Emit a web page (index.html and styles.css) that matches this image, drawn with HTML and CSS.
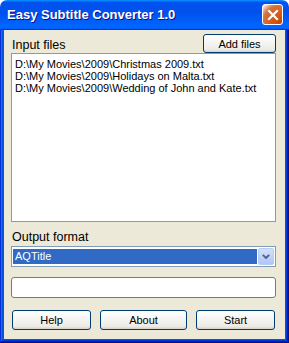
FILE: index.html
```html
<!doctype html>
<html>
<head>
  <meta charset="utf-8">
  <title>Easy Subtitle Converter 1.0</title>
  <link rel="stylesheet" href="styles.css">
</head>
<body>
<div class="window">
  <div class="title-bar">
    <span class="title-text">Easy Subtitle Converter 1.0</span>
    <span class="close-btn">
      <svg width="12" height="12" viewBox="0 0 12 12"><path d="M2 2 L10 10 M10 2 L2 10" stroke="#fff" stroke-width="2.2" stroke-linecap="square"/></svg>
    </span>
  </div>
  <div class="frame">
    <div class="client">
      <div class="files-head">
        <span class="field-label">Input files</span>
        <button class="xp-button add-btn">Add files</button>
      </div>
      <div class="file-list">
        <div class="file-item">D:\My Movies\2009\Christmas 2009.txt</div>
        <div class="file-item">D:\My Movies\2009\Holidays on Malta.txt</div>
        <div class="file-item">D:\My Movies\2009\Wedding of John and Kate.txt</div>
      </div>
      <div class="field-label format-label">Output format</div>
      <div class="combo">
        <span class="combo-value">AQTitle</span>
        <span class="combo-drop">
          <svg width="8" height="5" viewBox="0 0 8 5"><path d="M0.8 0.8 L4 4 L7.2 0.8" fill="none" stroke="#4d6185" stroke-width="1.8"/></svg>
        </span>
      </div>
      <div class="progress"></div>
      <div class="button-row">
        <button class="xp-button small-btn">Help</button>
        <button class="xp-button wide-btn">About</button>
        <button class="xp-button small-btn">Start</button>
      </div>
    </div>
  </div>
</div>
</body>
</html>
```

FILE: styles.css
```css
/* plain white page behind the dialog */
html,
body {
  margin: 0;
  background: #fff;
}
/* the whole dialog, frame included */
.window {
  width: 289px;
  height: 343px;
  display: flex;
  flex-direction: column;
  font-family: "Liberation Sans", Arial, sans-serif;
  font-size: 11px;
  color: #000;
}
.title-bar {
  height: 30px;
  flex-shrink: 0;
  display: flex;
  align-items: center;
  padding: 0 6px 0 7px;
  border-radius: 7px 7px 0 0;
  background: linear-gradient(180deg, #0997ff, #0053ee 8%, #0050ee 40%, #0066ff 88%, #0066ff 93%, #005bff 95%, #003dd7 96%, #003dd7);
  box-sizing: border-box;
}
.title-text {
  color: #fff;
  font-weight: bold;
  font-size: 13px;
  text-shadow: 1px 1px #0f1089;
  padding-bottom: 1px;
}
.close-btn {
  margin-left: auto;
  width: 19px;
  height: 19px;
  display: flex;
  align-items: center;
  justify-content: center;
  border: 1px solid #fff;
  border-radius: 3px;
  background: radial-gradient(circle at 90% 90%, #cc4600 0, #dc6527 55%, #cd7546 70%, #ffccb2 90%, #fff 100%);
  margin-top: -1px;
}
/* blue borders down the sides and along the bottom */
.frame {
  flex-grow: 1;
  display: flex;
  padding: 0 4px 4px;
  background: #0855dd;
  box-shadow: inset -1px -1px #00138c, inset 1px 0 #0831d9, inset -2px -2px #001ea0, inset 2px 0 #166aee, inset -3px -3px #003bda, inset 3px 0 #0855dd;
}
.client {
  flex-grow: 1;
  background: #ece9d8;
  padding: 0 9px 0 7px;
  display: flex;
  flex-direction: column;
}
.files-head {
  height: 23px;
  display: flex;
  align-items: flex-end;
  justify-content: space-between;
}
/* group labels are a size up from the list text */
.field-label {
  font-size: 12.5px;
  line-height: 14px;
  padding-left: 1px;
}
.files-head .field-label {
  margin-bottom: 1px;
}
.xp-button {
  font-family: inherit;
  font-size: 11px;
  color: #000;
  height: 20px;
  padding: 0;
  border: 1px solid #003c74;
  border-radius: 3px;
  background: linear-gradient(180deg, #fff, #ecebe6 86%, #d6d0c5);
  box-sizing: border-box;
}
.add-btn {
  width: 73px;
  height: 19px;
}
.file-list {
  height: 169px;
  box-sizing: border-box;
  border: 1px solid #7f9db9;
  background: #fff;
  padding: 4px 3px 0;
  flex-shrink: 0;
}
.file-item {
  line-height: 12px;
  white-space: nowrap;
}
.format-label {
  margin-top: 8px;
}
.combo {
  margin-top: 2px;
  height: 21px;
  box-sizing: border-box;
  border: 1px solid #7f9db9;
  background: #fff;
  padding: 1px;
  display: flex;
}
.combo-value {
  flex-grow: 1;
  margin: 1px 1px 1px 0;
  background: #316ac5;
  color: #fff;
  line-height: 15px;
  padding-left: 2px;
}
.combo-drop {
  width: 16px;
  box-sizing: border-box;
  border: 1px solid #bacbf3;
  border-radius: 2px;
  background: linear-gradient(180deg, #d4e0fc, #c0d3fb 50%, #b0c6f5);
  display: flex;
  align-items: center;
  justify-content: center;
}
.progress {
  margin-top: 10px;
  height: 21px;
  box-sizing: border-box;
  border: 1px solid #7a7a7a;
  border-radius: 3px;
  background: #fff;
}
.button-row {
  margin-top: 12px;
  display: flex;
  gap: 9px;
  padding-left: 1px;
}
.small-btn {
  width: 79px;
}
.wide-btn {
  width: 87px;
}
```
